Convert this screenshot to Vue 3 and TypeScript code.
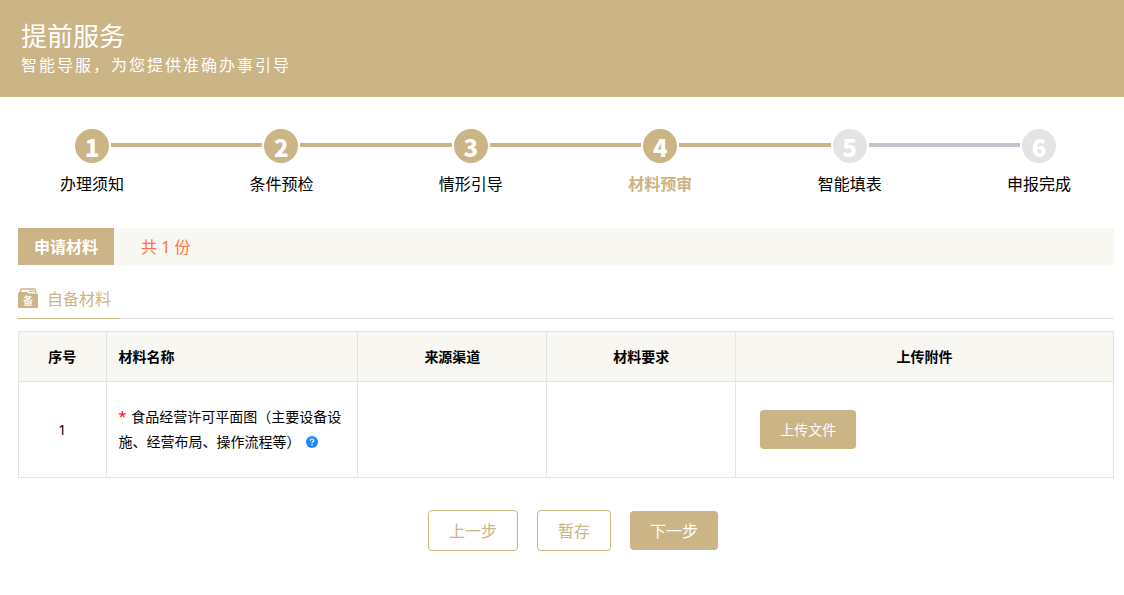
<script setup lang="ts">
import { ref } from 'vue'

interface Material {
  name: string
  required: boolean
  source: string
  demand: string
}

const steps: string[] = ['办理须知', '条件预检', '情形引导', '材料预审', '智能填表', '申报完成']
const current = ref(3)

const materials: Material[] = [
  {
    name: '食品经营许可平面图（主要设备设施、经营布局、操作流程等）',
    required: true,
    source: '',
    demand: '',
  },
]

function go(delta: number): void {
  current.value = Math.min(steps.length - 1, Math.max(0, current.value + delta))
}
</script>

<template>
  <div class="page">
    <header class="banner">
      <h1>提前服务</h1>
      <p>智能导服，为您提供准确办事引导</p>
    </header>

    <ol class="steps">
      <li
        v-for="(label, i) in steps"
        :key="label"
        :class="{ done: i <= current, active: i === current }"
      >
        <div class="step">
          <span class="dot">{{ i + 1 }}</span>
          <span class="label">{{ label }}</span>
        </div>
        <span v-if="i < steps.length - 1" class="line"></span>
      </li>
    </ol>

    <main>
      <div class="section-bar">
        <h2>申请材料</h2>
        <span class="count">共 {{ materials.length }} 份</span>
      </div>

      <div class="tabs">
        <div class="tab">
          <svg width="20" height="20" viewBox="0 0 20 20" aria-hidden="true">
            <path d="M2.5 5V2.5Q2.5 1 4 1H16Q17.5 1 17.5 2.5V5" fill="#fff" stroke="#cbb486" stroke-width="1.6" />
            <path d="M11 3.3H16" stroke="#cbb486" stroke-width="1.2" />
            <path d="M1.5 4H9L11 5.5H18.5Q20 5.5 20 7V18.5Q20 20 18.5 20H1.5Q0 20 0 18.5V5.5Q0 4 1.5 4Z" fill="#cbb486" />
            <g fill="none" stroke="#fff" stroke-width="1.1">
              <path d="M8.7 7.5L6 10.2M8 8.6H12.8Q10.5 11.8 5.3 12.6M7.8 9.4Q10.5 12 14.7 12.5" />
              <path d="M7 13.3H13V17.2H7ZM7 15.2H13M10 13.3V17.2" />
            </g>
          </svg>
          <span>自备材料</span>
        </div>
      </div>

      <table>
        <colgroup>
          <col class="c-no" />
          <col class="c-name" />
          <col class="c-mid" />
          <col class="c-mid" />
          <col />
        </colgroup>
        <thead>
          <tr>
            <th scope="col">序号</th>
            <th scope="col" class="name">材料名称</th>
            <th scope="col">来源渠道</th>
            <th scope="col">材料要求</th>
            <th scope="col">上传附件</th>
          </tr>
        </thead>
        <tbody>
          <tr v-for="(m, i) in materials" :key="m.name">
            <td>{{ i + 1 }}</td>
            <td class="name">
              <span v-if="m.required" class="star">*</span>{{ m.name
              }}<svg class="help" width="12" height="12" viewBox="0 0 12 12" role="img" aria-label="说明">
                <circle cx="6" cy="6" r="6" fill="#1e88ff" />
                <path d="M4.2 4.7Q4.3 3 6 3T7.8 4.5Q7.8 5.3 6.8 5.8Q6 6.2 6 7.1" fill="none" stroke="#fff" stroke-width="1.2" />
                <circle cx="6" cy="8.8" r="0.8" fill="#fff" />
              </svg>
            </td>
            <td>{{ m.source }}</td>
            <td>{{ m.demand }}</td>
            <td class="upload"><button type="button" class="btn solid small">上传文件</button></td>
          </tr>
        </tbody>
      </table>

      <div class="actions">
        <button type="button" class="btn" @click="go(-1)">上一步</button>
        <button type="button" class="btn">暂存</button>
        <button type="button" class="btn solid" @click="go(1)">下一步</button>
      </div>
    </main>
  </div>
</template>

<style>
body {
  margin: 0;
  background: #fff;
}
</style>

<style scoped>
.page {
  font-family: "Noto Sans", "Noto Sans CJK SC", sans-serif;
  font-size: 14px;
  color: #000;
}

.banner {
  background: #cbb486;
  color: #fff;
  padding: 20px 21px;
}

.banner h1 {
  margin: 0;
  font-size: 26px;
  font-weight: 400;
  line-height: 32px;
}

.banner p {
  margin: 0;
  padding-top: 1px;
  font-size: 16px;
  letter-spacing: 2px;
  line-height: 24px;
}

.steps {
  display: flex;
  list-style: none;
  margin: 0;
  padding: 32px 53px 0 60px;
}

.steps li {
  display: flex;
  flex: 1;
}

.steps li:last-child {
  flex: none;
}

.step {
  display: flex;
  flex-direction: column;
  align-items: center;
  width: 64px;
}

.dot {
  width: 34px;
  height: 34px;
  border-radius: 50%;
  background: #e4e4e4;
  color: #fff;
  font-family: "Noto Sans CJK SC", sans-serif;
  font-size: 24px;
  font-weight: 900;
  line-height: 36px;
  text-align: center;
}

.done .dot {
  background: #cbb486;
}

.label {
  margin-top: 9px;
  font-size: 16px;
  line-height: 24px;
  white-space: nowrap;
}

.active .label {
  color: #cbb486;
  font-weight: 700;
}

.line {
  flex: 1;
  height: 4px;
  margin: 14px -13px 0;
  background: #c0c4cc;
}

.done .line {
  background: #cbb486;
}

main {
  padding: 32px 10px 44px 18px;
}

.section-bar {
  display: flex;
  background: #f8f7f2;
  font-size: 16px;
  line-height: 35px;
}

.section-bar h2 {
  margin: 0;
  padding: 2px 16px 0;
  background: #cbb486;
  color: #fff;
  font-size: 16px;
  font-weight: 700;
}

.count {
  margin-left: 27px;
  padding-top: 2px;
  color: #ff7440;
}

.tabs {
  display: flex;
  margin-top: 13px;
  border-bottom: 1px solid #e4e4e4;
}

.tab {
  display: flex;
  align-items: center;
  gap: 9px;
  height: 40px;
  margin-bottom: -1px;
  padding-right: 9px;
  border-bottom: 1px solid #cbb486;
  color: #cbb486;
  font-size: 16px;
}

table {
  width: 100%;
  margin-top: 12px;
  border-collapse: collapse;
  table-layout: fixed;
}

.c-no {
  width: 8%;
}

.c-name {
  width: 23%;
}

.c-mid {
  width: 17.25%;
}

th,
td {
  box-sizing: border-box;
  border: 1px solid #e4e4e4;
  padding: 0 12px;
  line-height: 25px;
  text-align: center;
}

th {
  height: 50px;
  background: #f8f7f2;
  font-weight: 700;
}

td {
  height: 96px;
}

.name {
  text-align: left;
}

td.name {
  padding-bottom: 2px;
}

.star {
  margin-right: 5px;
  color: #f00;
}

.help {
  margin-left: 5px;
  vertical-align: -1px;
}

.upload {
  padding-left: 24px;
  text-align: left;
}

.btn {
  padding: 2px 20px 0;
  border: 1px solid #cbb486;
  border-radius: 4px;
  background: #fff;
  color: #cbb486;
  font-family: inherit;
  font-size: 16px;
  line-height: 37px;
  cursor: pointer;
}

.btn.solid {
  border: 0;
  background: #cbb486;
  color: #fff;
}

.btn.small {
  display: block;
  padding-top: 0;
  font-size: 14px;
  line-height: 39px;
}

.actions {
  display: flex;
  justify-content: center;
  align-items: center;
  gap: 19px;
  margin-top: 32px;
  padding-left: 14px;
}
</style>
